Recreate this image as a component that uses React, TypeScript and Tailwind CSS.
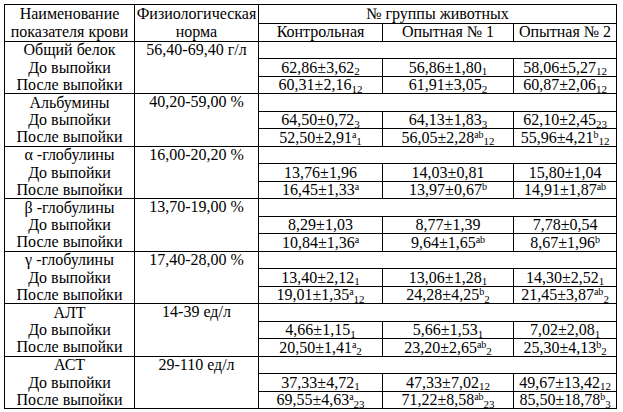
import React from "react";

type Val = { v: string; sup?: string; sub?: string };

interface Group {
  name: string;
  norm: string;
  before: Val[];
  after: Val[];
}

const groups: Group[] = [
  {
    name: "Общий белок",
    norm: "56,40-69,40 г/л",
    before: [
      { v: "62,86±3,62", sub: "2" },
      { v: "56,86±1,80", sub: "1" },
      { v: "58,06±5,27", sub: "12" },
    ],
    after: [
      { v: "60,31±2,16", sub: "12" },
      { v: "61,91±3,05", sub: "2" },
      { v: "60,87±2,06", sub: "12" },
    ],
  },
  {
    name: "Альбумины",
    norm: "40,20-59,00 %",
    before: [
      { v: "64,50±0,72", sub: "3" },
      { v: "64,13±1,83", sub: "3" },
      { v: "62,10±2,45", sub: "23" },
    ],
    after: [
      { v: "52,50±2,91", sup: "a", sub: "1" },
      { v: "56,05±2,28", sup: "ab", sub: "12" },
      { v: "55,96±4,21", sup: "b", sub: "12" },
    ],
  },
  {
    name: "α -глобулины",
    norm: "16,00-20,20 %",
    before: [{ v: "13,76±1,96" }, { v: "14,03±0,81" }, { v: "15,80±1,04" }],
    after: [
      { v: "16,45±1,33", sup: "a" },
      { v: "13,97±0,67", sup: "b" },
      { v: "14,91±1,87", sup: "ab" },
    ],
  },
  {
    name: "β -глобулины",
    norm: "13,70-19,00 %",
    before: [{ v: "8,29±1,03" }, { v: "8,77±1,39" }, { v: "7,78±0,54" }],
    after: [
      { v: "10,84±1,36", sup: "a" },
      { v: "9,64±1,65", sup: "ab" },
      { v: "8,67±1,96", sup: "b" },
    ],
  },
  {
    name: "γ -глобулины",
    norm: "17,40-28,00 %",
    before: [
      { v: "13,40±2,12", sub: "1" },
      { v: "13,06±1,28", sub: "1" },
      { v: "14,30±2,52", sub: "1" },
    ],
    after: [
      { v: "19,01±1,35", sup: "a", sub: "12" },
      { v: "24,28±4,25", sup: "b", sub: "2" },
      { v: "21,45±3,87", sup: "ab", sub: "2" },
    ],
  },
  {
    name: "АЛТ",
    norm: "14-39 ед/л",
    before: [
      { v: "4,66±1,15", sub: "1" },
      { v: "5,66±1,53", sub: "1" },
      { v: "7,02±2,08", sub: "1" },
    ],
    after: [
      { v: "20,50±1,41", sup: "a", sub: "2" },
      { v: "23,20±2,65", sup: "ab", sub: "2" },
      { v: "25,30±4,13", sup: "b", sub: "2" },
    ],
  },
  {
    name: "АСТ",
    norm: "29-110 ед/л",
    before: [
      { v: "37,33±4,72", sub: "1" },
      { v: "47,33±7,02", sub: "12" },
      { v: "49,67±13,42", sub: "12" },
    ],
    after: [
      { v: "69,55±4,63", sup: "a", sub: "23" },
      { v: "71,22±8,58", sup: "ab", sub: "23" },
      { v: "85,50±18,78", sup: "b", sub: "3" },
    ],
  },
];

const Value = ({ val }: { val: Val }) => (
  <>
    {val.v}
    {val.sup && <sup className="text-[10px]">{val.sup}</sup>}
    {val.sub && <sub className="text-[11px]">{val.sub}</sub>}
  </>
);

// rows alternate 17/18px so the groups come out at 52/53px
const rowH = (i: number) => (i % 2 === 0 ? "h-[17px]" : "h-[18px]");

export default function App() {
  return (
    <div className="bg-white w-[623px] h-[412px] pt-[4px] pl-[4px] text-black">
      <table className="border-collapse table-fixed w-[612px] [font-family:'Liberation_Serif',serif] text-[16px] leading-[16px]">
        <colgroup>
          <col className="w-[130px]" />
          <col className="w-[124px]" />
          <col className="w-[124px]" />
          <col className="w-[131px]" />
          <col className="w-[103px]" />
        </colgroup>
        <thead>
          <tr className="h-[18px]">
            <td rowSpan={2} className="border border-black p-0 text-center align-middle leading-[18px]">
              Наименование
              <br />
              показателя крови
            </td>
            <td rowSpan={2} className="border border-black p-0 text-center align-middle leading-[18px]">
              Физиологическая
              <br />
              норма
            </td>
            <td colSpan={3} className="border border-black p-0 text-center">
              № группы животных
            </td>
          </tr>
          <tr className="h-[18px]">
            <td className="border border-black p-0 text-center">Контрольная</td>
            <td className="border border-black p-0 text-center">Опытная № 1</td>
            <td className="border border-black p-0 text-center">Опытная № 2</td>
          </tr>
        </thead>
        <tbody>
          {groups.map((g, gi) => {
            const base = gi * 3;
            return (
              <React.Fragment key={g.name}>
                <tr className={rowH(base)}>
                  <td className="border-x border-t border-black p-0 text-center">{g.name}</td>
                  <td rowSpan={3} className="border border-black p-0 text-center align-top">
                    {g.norm}
                  </td>
                  <td colSpan={3} className="border border-black p-0"></td>
                </tr>
                <tr className={rowH(base + 1)}>
                  <td className="border-x border-black p-0 text-center">До выпойки</td>
                  {g.before.map((v, i) => (
                    <td key={i} className="border border-black p-0 text-center whitespace-nowrap">
                      <Value val={v} />
                    </td>
                  ))}
                </tr>
                <tr className={rowH(base + 2)}>
                  <td className="border-x border-b border-black p-0 text-center">После выпойки</td>
                  {g.after.map((v, i) => (
                    <td key={i} className="border border-black p-0 text-center whitespace-nowrap">
                      <Value val={v} />
                    </td>
                  ))}
                </tr>
              </React.Fragment>
            );
          })}
        </tbody>
      </table>
    </div>
  );
}
